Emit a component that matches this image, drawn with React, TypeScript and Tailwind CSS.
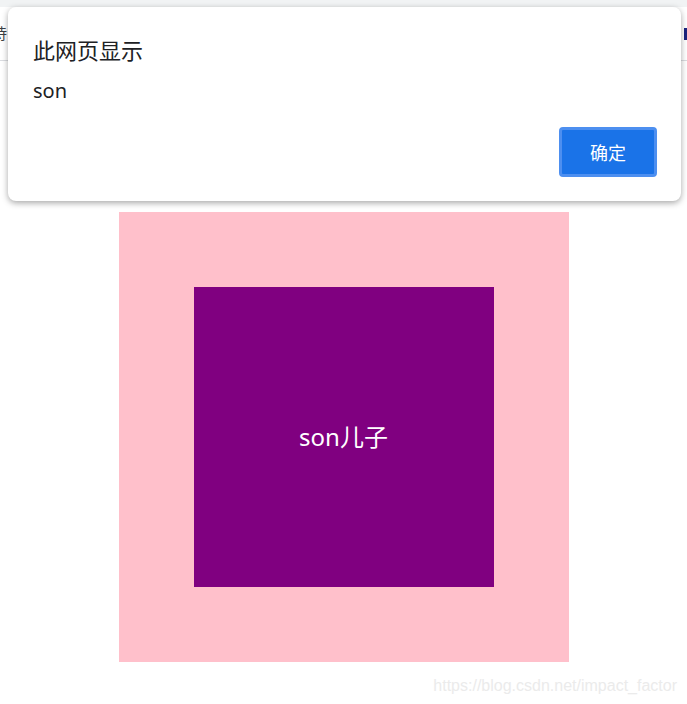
import React from 'react';

const App: React.FC = () => {
    return (
        <div className="relative w-[687px] h-[704px] bg-white overflow-hidden" style={{ fontFamily: '"Noto Sans", "Noto Sans CJK SC", sans-serif' }}>
            {/* browser bars behind the alert */}
            <div className="h-[7px] bg-[#f1f3f4]" />
            <div className="h-[54px] border-b border-[#dadce0] flex items-center justify-between">
                <span className="-ml-[8px] text-[15px] text-[#3c4043]">待</span>
                <span className="w-[3px] h-[12px] bg-[#1a237e]" />
            </div>

            {/* page */}
            <div className="flex justify-center pt-[151px]">
                <div className="w-[450px] h-[450px] bg-[#ffc0cb] flex items-center justify-center">
                    <div className="w-[300px] h-[300px] bg-[#800080] flex items-center justify-center">
                        <span className="text-white text-[24px]">son儿子</span>
                    </div>
                </div>
            </div>

            <div className="absolute right-[10px] top-[674px] text-[16px] text-[#ebebeb]" style={{ fontFamily: '"Liberation Sans", sans-serif' }}>
                https://blog.csdn.net/impact_factor
            </div>

            {/* alert dialog */}
            <div className="absolute left-[8px] top-[7px] w-[673px] h-[194px] bg-white rounded-[8px] shadow-[0_2px_6px_rgba(0,0,0,0.35)] px-[25px] pt-[28px]">
                <div className="text-[22px] leading-[30px] text-[#202124]">此网页显示</div>
                <div className="mt-[14px] text-[20px] leading-[24px] text-[#202124]">son</div>
                <div className="flex justify-end mt-[24px]">
                    <button className="w-[98px] h-[50px] mr-[-1px] pt-[3px] rounded-[4px] bg-[#1a73e8] border-[3px] border-[#4d8ff0] text-white text-[18px]">
                        确定
                    </button>
                </div>
            </div>
        </div>
    );
};

export default App;
